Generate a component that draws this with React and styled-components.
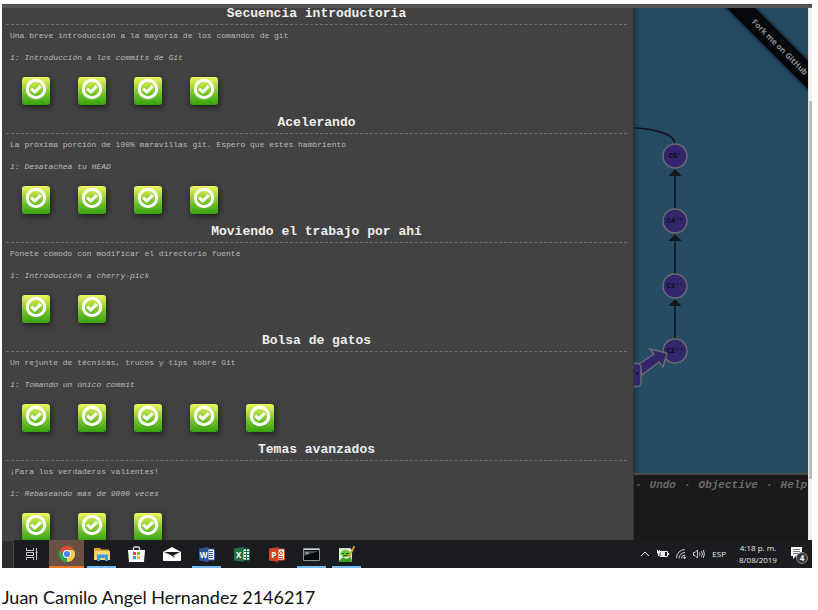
import React from "react";
import styled, { createGlobalStyle } from "styled-components";

const MONO = '"Courier New", "Liberation Mono", monospace';
const UI = '"Open Sans", "Noto Sans", sans-serif';

const GlobalStyle = createGlobalStyle`
  * { box-sizing: border-box; }
  body { margin: 0; background: #fff; }
  button { border: 0; padding: 0; background: none; color: inherit; font: inherit; cursor: pointer; }
`;

const Page = styled.main`
  display: grid;
  grid-template-rows: minmax(0, 1fr) auto;
  height: 100vh;
  padding: 4px 6px 0 2px;
`;

const Screen = styled.div`
  display: grid;
  grid-template-rows: 4px minmax(0, 1fr) auto;
  min-height: 0;
`;

const BrowserEdge = styled.div`
  background: #565656;
  border-top: 1px solid #474747;
`;

const Browser = styled.div`
  display: grid;
  grid-template-columns: minmax(0, 1fr) 174px 4px;
  min-height: 0;
`;

const Levels = styled.section`
  display: flex;
  flex-direction: column;
  gap: 12px;
  min-height: 0;
  padding: 0 6px 0 4px;
  overflow: hidden;
  background: #424242;
  border-right: 1px solid #333;
  font-family: ${MONO};
  color: #b9b9b9;
`;

const Series = styled.section`
  flex: none;
`;

const SeriesTitle = styled.h2`
  margin: 0;
  padding-bottom: 4px;
  border-bottom: 1px dashed #6f6f6f;
  font-size: 13px;
  line-height: 12px;
  text-align: center;
  color: #efefef;
`;

const SeriesText = styled.p`
  margin: ${(p) => (p.$step ? "10px 4px 13px" : "5px 4px 0")};
  font-size: 8px;
  line-height: 12px;
  font-style: ${(p) => (p.$step ? "italic" : "normal")};
`;

const LevelRow = styled.div`
  display: flex;
  gap: 28px;
  padding-left: 16px;
`;

const LevelButton = styled.button`
  display: flex;
  justify-content: center;
  width: 28px;
  height: 28px;
  && { background: linear-gradient(#eef763 0%, #b4dd45 28%, #6fc02b 62%, #36a30f 100%); }
  border-radius: 3px;
  box-shadow: 1px 2px 6px rgba(0, 0, 0, 0.6);
`;

const Sandbox = styled.div`
  display: grid;
  grid-template-rows: minmax(0, 1fr) 67px;
  min-height: 0;
`;

const Canvas = styled.div`
  position: relative;
  min-height: 0;
  overflow: hidden;
  background: linear-gradient(90deg, #1c394c 0, #264c64 6px);
  svg { display: block; }
`;

const Ribbon = styled.a`
  position: absolute;
  top: 29px;
  right: -62px;
  width: 180px;
  height: 20px;
  transform: rotate(45deg);
  background: #07080c;
  box-shadow: 0 0 5px rgba(0, 0, 0, 0.7);
  font: 700 8px/20px "Open Sans", sans-serif;
  text-align: center;
  text-decoration: none;
  color: #8b8b8b;
`;

const Commands = styled.nav`
  display: flex;
  justify-content: flex-end;
  align-items: flex-start;
  gap: 8px;
  padding: 4px 1px 0 0;
  border-top: 2px solid #4b4b4b;
  background: #1a1a1a;
  font: italic 700 11px/12px ${MONO};
  color: #6b6b6b;
`;

const CommandLink = styled.a`
  color: inherit;
  text-decoration: none;
`;

const ScrollTrack = styled.div`
  display: grid;
  grid-template-rows: 93px minmax(0, 1fr) 61px;
  background: #f1f1f1;
  border-left: 1px solid #dfe7eb;
`;

const ScrollThumb = styled.div`
  grid-row: 2;
  background: #bdbdbd;
`;

const Taskbar = styled.footer`
  display: flex;
  align-items: stretch;
  height: 28px;
  background: #1b1c20;
  color: #e9e9e9;
  font-family: ${UI};
`;

const TaskEdge = styled.div`
  width: 12px;
  background: #2d2e30;
  border: solid #45464a;
  border-width: 1px 1px 0 0;
`;

const TaskButton = styled.button`
  position: relative;
  display: grid;
  place-items: center;
  width: 35px;
  && { background: ${(p) => (p.$active ? "#6b5144" : "none")}; }
  box-shadow: ${(p) => (p.$active ? "inset 0 -2px #ea7424" : "none")};
  &::after {
    content: "";
    position: absolute;
    inset: auto 3px 0;
    height: 2px;
    background: ${(p) => (p.$open ? "#76b9ed" : "none")};
  }
`;

const Tray = styled.div`
  display: flex;
  align-items: center;
  gap: 7px;
  margin-left: auto;
  padding-right: 4px;
  font-size: 8px;
  line-height: 12px;
`;

const TrayButton = styled.button`
  display: grid;
  place-items: center;
`;

const Clock = styled.time`
  width: 50px;
  text-align: center;
`;

const Caption = styled.p`
  margin: 0;
  padding: 17px 0 1px;
  font: 18px/24px Lato, sans-serif;
  color: #111;
`;

const CheckIcon = () => (
  <svg width="24" height="24" viewBox="0 0 24 24" fill="none" stroke="#fff" aria-hidden="true">
    <circle cx="12" cy="12" r="8.700" strokeWidth="3" />
    <path d="M7.200 11.600l3.600 3.400 6-5.800" strokeWidth="3" />
  </svg>
);

const COMMITS = [
  { id: "C5'", y: 148 },
  { id: "C4''", y: 213 },
  { id: "C3''", y: 278 },
  { id: "C2''", y: 343 },
];

const CommitTree = () => (
  <svg width="100%" height="100%" role="img" aria-label="Commits">
    <g fill="none" stroke="#141618" strokeWidth="1.6">
      <path d="M0 120C21 121 41 126 41 136" />
      <path d="M41 166V201M41 231V266M41 296V331" />
    </g>
    <path d="M41 161l6.500 7h-13zM41 226l6.500 7h-13zM41 291l6.500 7h-13z" fill="#141618" />
    <g fill="#33266a" stroke="#6b6b70" strokeWidth="1.5">
      {COMMITS.map((c) => (
        <circle key={c.id} cx="41" cy={c.y} r="12" />
      ))}
      <path d="M5 356L20 346 16 341 33 345 29 359 25 354 8 367z" />
      <rect x="-30" y="355.500" width="37" height="23" rx="4" />
    </g>
    <g fill="#0b0a18" fontFamily={MONO} fontSize="7" fontWeight="700" textAnchor="middle">
      {COMMITS.map((c) => (
        <text key={c.id} x="41" y={c.y + 2}>{c.id}</text>
      ))}
      <text x="3" y="369">*</text>
    </g>
  </svg>
);

const TaskViewIcon = () => (
  <svg width="12" height="12" viewBox="0 0 12 12" fill="none" stroke="#ccc">
    <path d="M.5 0v2.500h7V0M.5 12V9.500h7V12M.5 4.500h7v3h-7zM10.500 0v12M9.500 4.500h2" />
  </svg>
);
const ChromeIcon = () => (
  <svg width="16" height="16" viewBox="0 0 16 16">
    <path d="M8 8L1.070 4A8 8 0 0 1 14.930 4z" fill="#e24a3b" />
    <path d="M8 8L14.930 4A8 8 0 0 1 8 16z" fill="#fbd13c" />
    <path d="M8 8L8 16A8 8 0 0 1 1.070 4z" fill="#2fa457" />
    <path d="M8 4h6.930L11.500 10z" fill="#fbd13c" />
    <path d="M4.500 10L1.070 4 8 4z" fill="#e24a3b" />
    <path d="M1.070 4L4.500 10 8 12 8 16A8 8 0 0 1 1.070 4" fill="#2fa457" />
    <circle cx="8" cy="8" r="4" fill="#fff" />
    <circle cx="8" cy="8" r="3.100" fill="#4a86ec" />
  </svg>
);
const FolderIcon = () => (
  <svg width="16" height="14" viewBox="0 0 16 14">
    <path d="M0 1h6l1 1.500h8V13H0z" fill="#e6a51f" />
    <path d="M1 4h15v9H0z" fill="#fbdb76" />
    <path d="M3 14V7.500h11V14h-3v-3H6v3z" fill="#3f9bdd" />
  </svg>
);
const StoreIcon = () => (
  <svg width="17" height="16" viewBox="0 0 17 16">
    <path d="M5.500 5V2.500q0-1.500 1.500-1.500h3q1.500 0 1.500 1.500V5" fill="none" stroke="#ddd" strokeWidth="1.300" />
    <path d="M0 4h17l-1 12H1z" fill="#fff" />
    <path d="M5 6h3v3H5z" fill="#ea4a2a" />
    <path d="M9 6h3v3H9z" fill="#7fba28" />
    <path d="M5 10h3v3H5z" fill="#27a3e8" />
    <path d="M9 10h3v3H9z" fill="#fbb917" />
  </svg>
);
const MailIcon = () => (
  <svg width="18" height="14" viewBox="0 0 18 14">
    <path d="M0 5l9-5 9 5v9H0z" fill="#fff" />
    <path d="M1 5h16L10.500 8.500 12 11 7.500 8z" fill="#1b1c20" />
  </svg>
);
const OfficeIcon = ({ color, letter, children }) => (
  <svg width="16" height="15" viewBox="0 0 16 15">
    <path d="M8 2h7.500v11H8z" fill="#fff" stroke={color} />
    <g stroke={color} fill="none">{children}</g>
    <path d="M0 1.500L9.500 0v15L0 13.500z" fill={color} />
    <text x="4.700" y="10.500" fontFamily="Open Sans, sans-serif" fontSize="8" fontWeight="700" fill="#fff" textAnchor="middle">{letter}</text>
  </svg>
);
const TerminalIcon = () => (
  <svg width="17" height="13" viewBox="0 0 17 13">
    <path d="M.5.5h16v12H.5z" fill="#07080a" stroke="#8f9497" />
    <path d="M1 1.500h15" stroke="#d8d8d8" />
    <path d="M1 3h15L1 8z" fill="#4a4d50" />
    <path d="M2.500 5h3" stroke="#ddd" />
  </svg>
);
const NotepadIcon = () => (
  <svg width="16" height="16" viewBox="0 0 16 16">
    <path d="M0 2h11l2 2v12H0z" fill="#e9eee2" />
    <path d="M1 3h10" stroke="#9a9" strokeDasharray="1 1" />
    <ellipse cx="6.500" cy="7.500" rx="5" ry="3.500" fill="#69cf2b" />
    <path d="M0 15l4-4 3 2 5-2 1 5H0z" fill="#3c9d24" />
    <path d="M3 7.500h2M7 7.500h3M4 10l5-1" stroke="#27521d" />
    <path d="M15.500 0L10 11" stroke="#d8a13a" strokeWidth="1.800" />
  </svg>
);

const TASKS = [
  { name: "Task view", icon: <TaskViewIcon /> },
  { name: "Chrome", icon: <ChromeIcon />, active: true },
  { name: "Explorer", icon: <FolderIcon />, open: true },
  { name: "Store", icon: <StoreIcon /> },
  { name: "Mail", icon: <MailIcon /> },
  { name: "Word", icon: <OfficeIcon color="#2a5699" letter="W"><path d="M10 4.500h4M10 6.500h4M10 8.500h4M10 10.500h4" /></OfficeIcon>, open: true },
  { name: "Excel", icon: <OfficeIcon color="#207245" letter="X"><path d="M12.500 2v11M10 4.500h5M10 7.500h5M10 10.500h5" /></OfficeIcon> },
  { name: "PowerPoint", icon: <OfficeIcon color="#d04423" letter="P"><circle cx="12" cy="6" r="1.500" /><path d="M10 9.500h4M10 11.500h4" /></OfficeIcon> },
  { name: "Terminal", icon: <TerminalIcon />, open: true },
  { name: "Notepad++", icon: <NotepadIcon />, open: true },
];

const ChevronIcon = () => (
  <svg width="10" height="8" viewBox="0 0 10 8" fill="none" stroke="#eee">
    <path d="M1 6l4-4 4 4" />
  </svg>
);
const BatteryIcon = () => (
  <svg width="12" height="8" viewBox="0 0 12 8">
    <path d="M3 1.500h7.500v5H3z" fill="none" stroke="#eee" />
    <path d="M4 2h4v4H4zM11 3h1v2h-1zM0 0h1v1h1V0h1v3L2 4v2H1V4L0 3z" fill="#eee" />
  </svg>
);
const WifiIcon = () => (
  <svg width="10" height="10" viewBox="0 0 10 10" fill="none" stroke="#ccc">
    <path d="M.5 9A8.500 8.500 0 0 1 9 .5M3 9.500A6 6 0 0 1 9 3.500M5.500 9.500A3.500 3.500 0 0 1 9 6" />
    <circle cx="8.500" cy="8.800" r=".8" fill="#fff" />
  </svg>
);
const SoundIcon = () => (
  <svg width="12" height="10" viewBox="0 0 12 10" fill="none" stroke="#ddd">
    <path d="M.5 3.500h1.500L4.500 1v8L2 6.500H.5zM6.500 3.500q1 1.500 0 3M8.500 2q2 3 0 6M10.300 1q2.200 4 0 8" strokeWidth=".9" />
  </svg>
);
const NoticeIcon = () => (
  <svg width="18" height="20" viewBox="0 0 18 20">
    <path d="M1 3h11v9H6l-3 3v-3H1z" fill="#fff" />
    <path d="M3 5.500h7M3 7.500h7M3 9.500h5" stroke="#777" />
    <circle cx="12" cy="14" r="5.500" fill="#37383b" stroke="#85868a" />
    <text x="12" y="17" fontFamily="Open Sans, sans-serif" fontSize="8" fontWeight="700" fill="#fff" textAnchor="middle">4</text>
  </svg>
);

const SERIES = [
  { title: "Secuencia introductoria", about: "Una breve introducción a la mayoría de los comandos de git", step: "1: Introducción a los commits de Git", levels: 4 },
  { title: "Acelerando", about: "La próxima porción de 100% maravillas git. Espero que estés hambriento", step: "1: Desatacheá tu HEAD", levels: 4 },
  { title: "Moviendo el trabajo por ahí", about: "Ponete cómodo con modificar el directorio fuente", step: "1: Introducción a cherry-pick", levels: 2 },
  { title: "Bolsa de gatos", about: "Un rejunte de técnicas, trucos y tips sobre Git", step: "1: Tomando un único commit", levels: 5 },
  { title: "Temas avanzados", about: "¡Para los verdaderos valientes!", step: "1: Rebaseando más de 9000 veces", levels: 3 },
];

export default function App() {
  return (
    <Page>
      <GlobalStyle />
      <Screen>
        <BrowserEdge />
        <Browser>
          <Levels>
            {SERIES.map((s) => (
              <Series key={s.title}>
                <SeriesTitle>{s.title}</SeriesTitle>
                <SeriesText>{s.about}</SeriesText>
                <SeriesText $step>{s.step}</SeriesText>
                <LevelRow>
                  {Array.from({ length: s.levels }, (_, i) => (
                    <LevelButton key={i} type="button" aria-label={`${s.title} ${i + 1}`}>
                      <CheckIcon />
                    </LevelButton>
                  ))}
                </LevelRow>
              </Series>
            ))}
          </Levels>
          <Sandbox>
            <Canvas>
              <CommitTree />
              <Ribbon href="#fork">Fork me on GitHub</Ribbon>
            </Canvas>
            <Commands>
              <span>·</span>
              <CommandLink href="#undo">Undo</CommandLink>
              <span>·</span>
              <CommandLink href="#objective">Objective</CommandLink>
              <span>·</span>
              <CommandLink href="#help">Help</CommandLink>
            </Commands>
          </Sandbox>
          <ScrollTrack>
            <ScrollThumb />
          </ScrollTrack>
        </Browser>
        <Taskbar>
          <TaskEdge />
          {TASKS.map((t) => (
            <TaskButton key={t.name} type="button" aria-label={t.name} $active={t.active} $open={t.open}>
              {t.icon}
            </TaskButton>
          ))}
          <Tray>
            <TrayButton type="button" aria-label="More"><ChevronIcon /></TrayButton>
            <TrayButton type="button" aria-label="Battery"><BatteryIcon /></TrayButton>
            <TrayButton type="button" aria-label="Network"><WifiIcon /></TrayButton>
            <TrayButton type="button" aria-label="Volume"><SoundIcon /></TrayButton>
            <TrayButton type="button">ESP</TrayButton>
            <Clock>4:18 p. m.<br />8/08/2019</Clock>
            <TrayButton type="button" aria-label="Notifications"><NoticeIcon /></TrayButton>
          </Tray>
        </Taskbar>
      </Screen>
      <Caption>Juan Camilo Angel Hernandez 2146217</Caption>
    </Page>
  );
}
